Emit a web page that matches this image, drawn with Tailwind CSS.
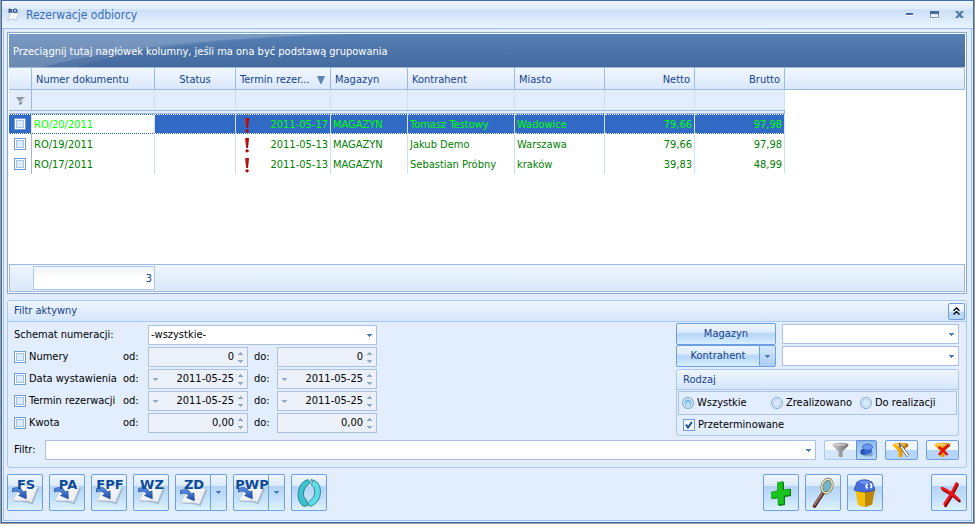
<!DOCTYPE html>
<html lang="pl">
<head>
<meta charset="utf-8">
<title>Rezerwacje odbiorcy</title>
<script src="https://cdn.jsdelivr.net/npm/@tailwindcss/browser@4"></script>
</head>
<body class="bg-[#9d9d9d] font-['DejaVu_Sans_Condensed','DejaVu_Sans',sans-serif] text-[11px] leading-4 text-black">
<svg class="absolute h-0 w-0" aria-hidden="true">
  <defs>
    <linearGradient id="arrowFill" x1="0" y1="0" x2="0" y2="1"><stop offset="0" stop-color="#5a94ee"/><stop offset="1" stop-color="#1c4aa6"/></linearGradient>
    <linearGradient id="paperFill" x1="0" y1="0" x2="1" y2="1"><stop offset="0" stop-color="#ffffff"/><stop offset="1" stop-color="#e4e8ee"/></linearGradient>
    <linearGradient id="gold" x1="0" y1="0" x2="1" y2="0"><stop offset="0" stop-color="#ffc62a"/><stop offset=".5" stop-color="#f0a000"/><stop offset="1" stop-color="#a85f00"/></linearGradient>
    <linearGradient id="silver" x1="0" y1="0" x2="1" y2="0"><stop offset="0" stop-color="#cfcfcf"/><stop offset=".5" stop-color="#9a9a9a"/><stop offset="1" stop-color="#6f6f6f"/></linearGradient>
    <linearGradient id="redFill" x1="0" y1="0" x2="1" y2="0"><stop offset="0" stop-color="#e02020"/><stop offset="1" stop-color="#8e0000"/></linearGradient>
  </defs>
  <symbol id="down" viewBox="0 0 5 3"><path d="M0 0H5V1H4V2H3V3H2V2H1V1H0Z" fill="currentColor"/></symbol>
  <symbol id="up" viewBox="0 0 5 3"><path d="M0 3H5V2H4V1H3V0H2V1H1V2H0Z" fill="currentColor"/></symbol>
  <symbol id="bang" viewBox="0 0 6 16"><path d="M1 1.2Q3 .2 5 1.2L4 11H2.2Z" fill="url(#redFill)"/><ellipse cx="3.1" cy="13.8" rx="1.7" ry="1.6" fill="#b00808"/></symbol>
  <symbol id="sheet" viewBox="0 0 36 37">
    <path d="M14 12L31 13L24.500 29.500Q20 27 14 27L6 26.500Z" fill="#6b7f96" opacity=".45" transform="translate(1 1)"/>
    <path d="M14 11L31 12.500L24.500 28.500Q20 26 14 27L6 26.500Z" fill="url(#paperFill)" stroke="#b9c2cd" stroke-width=".6"/>
    <path d="M5.500 14.500Q13 11.500 16.500 18L19 16.800L19.300 24.800L11.500 21.500L13.700 20Q11 15.500 5.500 18Z" fill="url(#arrowFill)" stroke="#1b3f86" stroke-width=".6"/>
  </symbol>
  <symbol id="funnel" viewBox="0 0 17 16">
    <path d="M.5 3.500L6.500 9.500V14.500Q8.500 16 10.500 14.500V9.500L16.500 3.500Z"/>
    <ellipse cx="8.500" cy="3" rx="8" ry="2.300"/>
    <ellipse cx="8.500" cy="2.700" rx="5.500" ry="1.100" fill="#fff" opacity=".45"/>
  </symbol>
</svg>

<div class="flex min-h-screen flex-col p-px pt-0">
<div class="flex flex-1 flex-col border border-[#3f6da8] bg-[#e2edfd]">
  <header class="flex h-7 items-center gap-[6px] border-b border-[#9dbfe9] bg-[linear-gradient(#f0f6fe_0px,#deebfb_8px,#cbdff7_9px,#eaf4fe_27px)] pl-[5px] pr-[6px]">
    <svg width="13" height="13" viewBox="0 0 13 13"><path d="M4 3L12 5L9 12.500L6.500 11L.5 11.500Z" fill="#f7f8fa" stroke="#b3bac4" stroke-width=".7"/><text x="1" y="5" font-size="6" font-weight="700" font-family="DejaVu Sans" fill="#0a3a80">RO</text></svg>
    <h1 class="flex-1 text-[12px] text-[#376db5]">Rezerwacje odbiorcy</h1>
    <div class="flex items-center gap-[9px]">
      <button aria-label="Minimalizuj" class="grid h-4 w-4 place-items-center"><svg width="7" height="3"><path d="M0 0H7V2H0Z" fill="#47699d"/><path d="M0 2H7V3H0Z" fill="#fff"/></svg></button>
      <button aria-label="Maksymalizuj" class="grid h-4 w-4 place-items-center"><svg width="9" height="8"><path d="M.5 .5H8.500V6.500H.5Z" fill="#eaf3fd" stroke="#7793bd"/><path d="M0 0H9V3H0Z" fill="#47699d"/><path d="M0 7H9V8H0Z" fill="#fff"/></svg></button>
      <button aria-label="Zamknij okno" class="grid h-4 w-4 place-items-center"><svg width="9" height="8" viewBox="0 0 9 8"><path d="M0 0H3L4.500 2L6 0H9L6 3.500L9 7H6L4.500 5.200L3 7H0L3 3.500Z" fill="#56779f"/></svg></button>
    </div>
  </header>

  <main class="mx-px mb-px flex flex-1 flex-col border-x border-b border-[#9dbfe9] pl-[3px] pr-1 pt-[3px] pb-[9px]">
    <section class="flex flex-1 flex-col border border-[#8ba8d0] bg-white p-px" aria-label="Lista rezerwacji">
      <div class="relative flex h-[33px] items-center bg-linear-to-b from-[#5680b5] to-[#446a9e] px-1 pt-[2px] text-white">
        <svg class="absolute inset-0 h-full w-[350px]" viewBox="0 0 350 33" preserveAspectRatio="none"><path d="M0 0H350Q150 6 67 33H0Z" fill="#fff" opacity=".07"/><path d="M0 0H325Q130 7 34 33H0Z" fill="#fff" opacity=".15"/></svg>
        <p class="relative">Przeciągnij tutaj nagłówek kolumny, jeśli ma ona być podstawą grupowania</p>
      </div>
      <table class="w-full table-fixed border-separate border-spacing-0 text-left text-[#008000]">
        <colgroup><col class="w-[23px]"><col class="w-[123px]"><col class="w-[81px]"><col class="w-[95px]"><col class="w-[77px]"><col class="w-[107px]"><col class="w-[90px]"><col class="w-[90px]"><col class="w-[90px]"><col></colgroup>
        <thead class="text-[#15428b] [&_th]:h-[23px] [&_th]:border-y [&_th]:border-r [&_th]:border-[#9fb9dc] [&_th]:bg-linear-to-b [&_th]:from-[#f1f7ff] [&_th]:to-[#d9e8fb] [&_th]:px-1 [&_th]:pt-[2px] [&_th]:pb-0 [&_th]:font-normal [&_th]:whitespace-nowrap">
          <tr>
            <th aria-label="Wybór"></th><th>Numer dokumentu</th><th class="text-center">Status</th>
            <th><span class="flex items-center justify-between pr-px">Termin rezer...<svg width="8" height="8"><path d="M0 0H8L4.500 8H3.500Z" fill="#5f83b4"/></svg></span></th>
            <th>Magazyn</th><th>Kontrahent</th><th>Miasto</th><th class="text-right">Netto</th><th class="text-right">Brutto</th><td class="border-y border-r border-[#9fb9dc] bg-linear-to-b from-[#f1f7ff] to-[#d9e8fb] rounded-tr-[3px]"></td>
          </tr>
        </thead>
        <tbody>
          <tr class="[&_td]:h-5 [&_td]:border-r [&_td]:border-[#d0dff2] [&_td]:bg-[#e2edfd] [&_td]:p-0">
            <td class="border-r-[#9fb9dc]!"><svg class="mx-auto" width="9" height="9" viewBox="0 0 9 9"><path d="M0 1H9L6 5V8L3 9V5Z" fill="#8d949e"/><path d="M1 8L8 2" stroke="#e2edfd"/></svg></td><td></td><td></td><td></td><td></td><td></td><td></td><td></td><td></td><td class="border-0! bg-white!"></td>
          </tr>
          <tr><td colspan="9" class="h-1 border-y border-r border-[#9fb9dc] bg-[#e2edfd] p-0"></td><td class="p-0"></td></tr>
          <tr class="text-[#00ff00] [&_td]:h-5 [&_td]:border-r [&_td]:border-y [&_td]:border-y-white [&_td]:[border-top-style:dotted] [&_td]:[border-bottom-style:dotted] [&_td]:border-r-[#d0dff2] [&_td]:bg-[#316ac5] [&_td]:px-[2px] [&_td]:pt-[2px] [&_td]:pb-0">
            <td class="pt-0!"><input type="checkbox" aria-label="Zaznacz RO/20/2011" class="mx-auto block h-3 w-3 appearance-none border border-[#6f9bd6] bg-[#dcebfb] shadow-[inset_0_0_0_1px_#fff,inset_0_0_0_2px_#a9c2e2]"></td>
            <td class="border-y-[#316ac5]! bg-white!">RO/20/2011</td><td></td>
            <td><span class="flex items-center justify-between pl-[6px]"><svg width="6" height="16"><use href="#bang"/></svg>2011-05-17</span></td>
            <td>MAGAZYN</td><td>Tomasz Testowy</td><td>Wadowice</td><td class="text-right">79,66</td><td class="text-right [border-right-style:dotted]">97,98</td><td class="border-0! bg-white!"></td>
          </tr>
          <tr class="[&_td]:h-5 [&_td]:border-r [&_td]:border-[#d0dff2] [&_td]:px-[2px] [&_td]:pt-[2px] [&_td]:pb-0">
            <td class="border-r-[#9fb9dc]! pt-0!"><input type="checkbox" aria-label="Zaznacz RO/19/2011" class="mx-auto block h-3 w-3 appearance-none border border-[#6f9bd6] bg-[#dcebfb] shadow-[inset_0_0_0_1px_#fff,inset_0_0_0_2px_#a9c2e2]"></td>
            <td>RO/19/2011</td><td></td>
            <td><span class="flex items-center justify-between pl-[6px]"><svg width="6" height="16"><use href="#bang"/></svg>2011-05-13</span></td>
            <td>MAGAZYN</td><td>Jakub Demo</td><td>Warszawa</td><td class="text-right">79,66</td><td class="text-right">97,98</td><td class="border-0!"></td>
          </tr>
          <tr class="[&_td]:h-5 [&_td]:border-r [&_td]:border-[#d0dff2] [&_td]:px-[2px] [&_td]:pt-[2px] [&_td]:pb-0">
            <td class="border-r-[#9fb9dc]! pt-0!"><input type="checkbox" aria-label="Zaznacz RO/17/2011" class="mx-auto block h-3 w-3 appearance-none border border-[#6f9bd6] bg-[#dcebfb] shadow-[inset_0_0_0_1px_#fff,inset_0_0_0_2px_#a9c2e2]"></td>
            <td>RO/17/2011</td><td></td>
            <td><span class="flex items-center justify-between pl-[6px]"><svg width="6" height="16"><use href="#bang"/></svg>2011-05-13</span></td>
            <td>MAGAZYN</td><td>Sebastian Próbny</td><td>kraków</td><td class="text-right">39,83</td><td class="text-right">48,99</td><td class="border-0!"></td>
          </tr>
        </tbody>
      </table>
      <footer class="mt-auto flex h-7 border border-[#9fb9dc] bg-linear-to-b from-[#eef5ff] to-[#d9e8fb] py-px pl-[23px]">
        <output class="w-[122px] border border-[#b0c6e4] bg-linear-to-b from-[#edf3f8] to-white to-50% pr-[2px] text-right leading-6 text-[#15428b]">3</output>
      </footer>
    </section>

    <section class="mt-[6px] rounded-[3px] border border-[#a9c8f0]">
      <div class="flex h-[21px] items-center justify-between rounded-t-[2px] border-b border-[#a9c8f0] bg-linear-to-b from-[#eef5ff] to-[#d5e6fb] pl-[6px] pr-px">
        <h2 class="text-[#15428b]">Filtr aktywny</h2>
        <button aria-label="Zwiń filtr" class="grid h-[17px] w-[17px] place-items-center rounded-[2px] border border-[#6b9fe0] bg-linear-to-b from-[#f2f8ff] from-45% to-[#b8d8f8] to-55%"><svg width="7" height="8" fill="none" stroke="#000" stroke-width="1.400"><path d="M.5 3.700L3.500 .9L6.500 3.700M.5 7.500L3.500 4.700L6.500 7.500"/></svg></button>
      </div>
      <div class="flex justify-between pl-[6px] pr-[7px]">
        <div class="grid auto-rows-[20px] grid-cols-[109px_25px_100px_29px_100px] items-center gap-y-[2px] pt-[3px]
          [&_input[type=text]]:min-w-0 [&_input[type=text]]:flex-1 [&_input[type=text]]:bg-transparent [&_input[type=text]]:text-right [&_input[type=text]]:text-black">
          <label for="schemat" class="col-span-2">Schemat numeracji:</label>
          <div class="relative col-span-3 h-5"><select id="schemat" class="h-5 w-full appearance-none border border-[#abc1de] bg-white px-[2px]"><option>-wszystkie-</option></select><svg class="pointer-events-none absolute top-[9px] right-[5px] text-[#4a7ac0]" width="5" height="3"><use href="#down"/></svg></div>

          <label class="flex items-center gap-[3px]"><input type="checkbox" class="h-3 w-3 appearance-none border border-[#6f9bd6] bg-[#dcebfb] shadow-[inset_0_0_0_1px_#fff,inset_0_0_0_2px_#a9c2e2]">Numery</label>
          <label for="n1">od:</label>
          <div class="flex h-5 items-center border border-[#abc1de] bg-[#ebf0f9]"><input id="n1" type="text" disabled value="0"><span class="flex w-[13px] flex-col items-center gap-[5px] text-[#8fa9cc]"><svg width="5" height="3"><use href="#up"/></svg><svg width="5" height="3"><use href="#down"/></svg></span></div>
          <label for="n2" class="pl-[6px]">do:</label>
          <div class="flex h-5 items-center border border-[#abc1de] bg-[#ebf0f9]"><input id="n2" type="text" disabled value="0"><span class="flex w-[13px] flex-col items-center gap-[5px] text-[#8fa9cc]"><svg width="5" height="3"><use href="#up"/></svg><svg width="5" height="3"><use href="#down"/></svg></span></div>

          <label class="flex items-center gap-[3px] whitespace-nowrap"><input type="checkbox" class="h-3 w-3 appearance-none border border-[#6f9bd6] bg-[#dcebfb] shadow-[inset_0_0_0_1px_#fff,inset_0_0_0_2px_#a9c2e2]">Data wystawienia</label>
          <label for="d1">od:</label>
          <div class="flex h-5 items-center border border-[#abc1de] bg-[#ebf0f9]"><svg class="ml-1 text-[#8fa9cc]" width="5" height="3"><use href="#down"/></svg><input id="d1" type="text" disabled value="2011-05-25"><span class="flex w-[13px] flex-col items-center gap-[5px] text-[#8fa9cc]"><svg width="5" height="3"><use href="#up"/></svg><svg width="5" height="3"><use href="#down"/></svg></span></div>
          <label for="d2" class="pl-[6px]">do:</label>
          <div class="flex h-5 items-center border border-[#abc1de] bg-[#ebf0f9]"><svg class="ml-1 text-[#8fa9cc]" width="5" height="3"><use href="#down"/></svg><input id="d2" type="text" disabled value="2011-05-25"><span class="flex w-[13px] flex-col items-center gap-[5px] text-[#8fa9cc]"><svg width="5" height="3"><use href="#up"/></svg><svg width="5" height="3"><use href="#down"/></svg></span></div>

          <label class="flex items-center gap-[3px] whitespace-nowrap"><input type="checkbox" class="h-3 w-3 appearance-none border border-[#6f9bd6] bg-[#dcebfb] shadow-[inset_0_0_0_1px_#fff,inset_0_0_0_2px_#a9c2e2]">Termin rezerwacji</label>
          <label for="t1">od:</label>
          <div class="flex h-5 items-center border border-[#abc1de] bg-[#ebf0f9]"><svg class="ml-1 text-[#8fa9cc]" width="5" height="3"><use href="#down"/></svg><input id="t1" type="text" disabled value="2011-05-25"><span class="flex w-[13px] flex-col items-center gap-[5px] text-[#8fa9cc]"><svg width="5" height="3"><use href="#up"/></svg><svg width="5" height="3"><use href="#down"/></svg></span></div>
          <label for="t2" class="pl-[6px]">do:</label>
          <div class="flex h-5 items-center border border-[#abc1de] bg-[#ebf0f9]"><svg class="ml-1 text-[#8fa9cc]" width="5" height="3"><use href="#down"/></svg><input id="t2" type="text" disabled value="2011-05-25"><span class="flex w-[13px] flex-col items-center gap-[5px] text-[#8fa9cc]"><svg width="5" height="3"><use href="#up"/></svg><svg width="5" height="3"><use href="#down"/></svg></span></div>

          <label class="flex items-center gap-[3px]"><input type="checkbox" class="h-3 w-3 appearance-none border border-[#6f9bd6] bg-[#dcebfb] shadow-[inset_0_0_0_1px_#fff,inset_0_0_0_2px_#a9c2e2]">Kwota</label>
          <label for="k1">od:</label>
          <div class="flex h-5 items-center border border-[#abc1de] bg-[#ebf0f9]"><input id="k1" type="text" disabled value="0,00"><span class="flex w-[13px] flex-col items-center gap-[5px] text-[#8fa9cc]"><svg width="5" height="3"><use href="#up"/></svg><svg width="5" height="3"><use href="#down"/></svg></span></div>
          <label for="k2" class="pl-[6px]">do:</label>
          <div class="flex h-5 items-center border border-[#abc1de] bg-[#ebf0f9]"><input id="k2" type="text" disabled value="0,00"><span class="flex w-[13px] flex-col items-center gap-[5px] text-[#8fa9cc]"><svg width="5" height="3"><use href="#up"/></svg><svg width="5" height="3"><use href="#down"/></svg></span></div>
        </div>

        <div class="w-[283px] pt-px">
          <div class="grid grid-cols-[100px_1fr] items-center gap-x-[6px]">
            <button class="h-[22px] rounded-[2px] border border-[#6b9fe0] bg-[linear-gradient(#eef6ff_0%,#dcebfc_40%,#b5d5f7_50%,#d8efff_100%)] text-[#15428b]">Magazyn</button>
            <div class="relative h-5"><select aria-label="Magazyn" class="h-5 w-full appearance-none border border-[#abc1de] bg-white px-[2px]"><option></option></select><svg class="pointer-events-none absolute top-[9px] right-[5px] text-[#4a7ac0]" width="5" height="3"><use href="#down"/></svg></div>
            <div class="flex">
              <button class="h-[22px] flex-1 rounded-l-[2px] border border-[#6b9fe0] bg-[linear-gradient(#eef6ff_0%,#dcebfc_40%,#b5d5f7_50%,#d8efff_100%)] text-[#15428b]">Kontrahent</button>
              <button aria-label="Kontrahent – więcej" class="grid h-[22px] w-4 place-items-center rounded-r-[2px] border border-l-0 border-[#6b9fe0] bg-linear-to-b from-[#d5e8fc] to-[#a9cdf5] text-[#4a7ac0]"><svg width="5" height="3"><use href="#down"/></svg></button>
            </div>
            <div class="relative h-5"><select aria-label="Kontrahent" class="h-5 w-full appearance-none border border-[#abc1de] bg-white px-[2px]"><option></option></select><svg class="pointer-events-none absolute top-[9px] right-[5px] text-[#4a7ac0]" width="5" height="3"><use href="#down"/></svg></div>
          </div>
          <div role="group" aria-labelledby="rodzaj-t" class="mt-[2px] rounded-[3px] border border-[#a9c8f0] [&_input[type=radio]]:h-3 [&_input[type=radio]]:w-3 [&_input[type=radio]]:appearance-none [&_input[type=radio]]:rounded-full [&_input[type=radio]]:border [&_input[type=radio]]:border-[#7ba7dd] [&_input[type=radio]]:shadow-[inset_0_0_0_1px_#eef6ff,inset_0_0_0_2px_#b9cfe9]">
            <h3 id="rodzaj-t" class="h-5 rounded-t-[2px] border-b border-[#a9c8f0] bg-linear-to-b from-[#eef5ff] to-[#d5e6fb] pl-[6px] pt-[2px] text-[#15428b]">Rodzaj</h3>
            <div class="mx-px mt-px grid h-6 grid-cols-[89px_89px_1fr] items-center border border-[#abc1de] pl-[3px]">
              <label class="flex items-center gap-[3px]"><input type="radio" name="rodzaj" checked class="bg-[radial-gradient(circle_at_50%_65%,#d9f5ff,#4aa6ee_60%)]">Wszystkie</label>
              <label class="flex items-center gap-[3px]"><input type="radio" name="rodzaj" class="bg-[#d8e9fb]">Zrealizowano</label>
              <label class="flex items-center gap-[3px]"><input type="radio" name="rodzaj" class="bg-[#d8e9fb]">Do realizacji</label>
            </div>
            <label class="flex h-5 items-center gap-[3px] pl-[6px]"><span class="relative h-3 w-3"><input type="checkbox" checked class="block h-3 w-3 appearance-none border border-[#6f9bd6] bg-[#f1f7fe]"><svg class="pointer-events-none absolute inset-0" width="12" height="12" fill="none" stroke="#1d4f96" stroke-width="2"><path d="M3 5.500L5 8.500L9 3"/></svg></span>Przeterminowane</label>
          </div>
        </div>
      </div>
      <div class="mt-1 mb-[7px] flex items-center pl-[6px] pr-[7px]">
        <label for="filtr" class="w-[31px]">Filtr:</label>
        <div class="relative h-5 flex-1"><select id="filtr" class="h-5 w-full appearance-none border border-[#abc1de] bg-white px-[2px]"><option></option></select><svg class="pointer-events-none absolute top-[9px] right-[5px] text-[#4a7ac0]" width="5" height="3"><use href="#down"/></svg></div>
        <div class="ml-2 flex h-5">
          <button aria-label="Filtruj" class="grid w-8 place-items-center rounded-l-[2px] border border-r-0 border-[#a9c8ee] bg-linear-to-b from-[#f6faff] from-50% to-[#d4e6fa] to-50%"><svg width="17" height="16" fill="url(#silver)"><use href="#funnel"/></svg></button>
          <button aria-label="Przypnij" class="grid w-[21px] place-items-center rounded-r-[2px] border border-[#5b8fd6] bg-linear-to-b from-[#8fb8ea] to-[#b9dbfa]"><svg width="15" height="14" viewBox="0 0 15 14"><ellipse cx="9" cy="11" rx="5" ry="2.500" fill="#51719f" opacity=".5"/><ellipse cx="4.500" cy="9" rx="3.200" ry="3" fill="#2a53b8"/><path d="M4 3Q8 0 12 2.500L13 9Q10 12 6 11Z" fill="#3465d2"/><ellipse cx="8.500" cy="4.200" rx="5" ry="3" fill="#6c9af2" stroke="#2b55b5" stroke-width=".7"/></svg></button>
        </div>
        <button aria-label="Edytuj filtr" class="ml-2 grid h-5 w-[33px] place-items-center rounded-[2px] border border-[#6b9fe0] bg-linear-to-b from-[#f2f8ff] from-50% to-[#b5d6f8] to-50%"><svg width="19" height="16"><g fill="url(#gold)"><use href="#funnel" width="17" height="16"/></g><path d="M8 3L16 14" stroke="#555" stroke-width="3"/><path d="M8 3L16 14" stroke="#fff" stroke-width="1.800"/><path d="M7 1L9 5" stroke="#222"/></svg></button>
        <button aria-label="Usuń filtr" class="ml-2 grid h-5 w-[33px] place-items-center rounded-[2px] border border-[#6b9fe0] bg-linear-to-b from-[#f2f8ff] from-50% to-[#b5d6f8] to-50%"><svg width="18" height="16"><g fill="url(#gold)"><use href="#funnel" width="17" height="16"/></g><path d="M4.500 5Q9 7.500 13.500 13M14.500 3Q9 7 5 13" fill="none" stroke="#e01010" stroke-width="2.500"/></svg></button>
      </div>
    </section>

    <nav aria-label="Polecenia" class="mt-[6px] flex gap-[6px] [&_button]:h-[37px] [&_button]:border [&_button]:border-[#6b9fe0] [&_button]:bg-[linear-gradient(#eff6ff_0%,#dcebfb_30%,#b3d3f4_31%,#c5e1fa_70%,#dff3ff_100%)] [&_text]:fill-[#0d4a96] [&_text]:font-['DejaVu_Sans'] [&_text]:text-[13px] [&_text]:font-bold">
      <button class="w-9 rounded-[2px]"><svg class="-m-px" width="36" height="37"><use href="#sheet"/><text x="19" y="15" text-anchor="middle">FS</text></svg></button>
      <button class="w-9 rounded-[2px]"><svg class="-m-px" width="36" height="37"><use href="#sheet"/><text x="19" y="15" text-anchor="middle">PA</text></svg></button>
      <button class="w-9 rounded-[2px]"><svg class="-m-px" width="36" height="37"><use href="#sheet"/><text x="19" y="15" text-anchor="middle">FPF</text></svg></button>
      <button class="w-9 rounded-[2px]"><svg class="-m-px" width="36" height="37"><use href="#sheet"/><text x="19" y="15" text-anchor="middle">WZ</text></svg></button>
      <div class="flex">
        <button class="w-9 rounded-l-[2px]"><svg class="-m-px" width="36" height="37"><use href="#sheet" y="2" width="36" height="37"/><text x="19" y="15" text-anchor="middle">ZD</text></svg></button>
        <button aria-label="ZD – więcej" class="grid w-4 place-items-center rounded-r-[2px] border-l-0! text-[#4a7ac0]"><svg width="5" height="3"><use href="#down"/></svg></button>
      </div>
      <div class="flex">
        <button class="w-9 rounded-l-[2px]"><svg class="-m-px" width="36" height="37"><use href="#sheet"/><text x="19" y="15" text-anchor="middle">PWP</text></svg></button>
        <button aria-label="PWP – więcej" class="grid w-4 place-items-center rounded-r-[2px] border-l-0! text-[#4a7ac0]"><svg width="5" height="3"><use href="#down"/></svg></button>
      </div>
      <button aria-label="Odśwież" class="w-9 rounded-[2px]"><svg class="-m-px" width="36" height="37"><g stroke="#14707c" stroke-width=".8"><path d="M17 5.500Q8 8 7 20Q7 29 13 32.500L16.500 31.500L15.500 26Q11.500 23 12.500 18Q13.500 13 17 11L19.500 8Z" fill="#3cc3cf"/><path d="M20 5.500Q29 7 29.500 17Q29.500 29 19 32.500L16.500 29L19 26.500Q23.500 24 24 18Q24 13 20 10.500L21.500 8Z" fill="#5fdde6"/></g></svg></button>

      <button aria-label="Dodaj" class="ml-auto w-9 rounded-[2px]"><svg class="-m-px" width="36" height="37"><path d="M15 9.500L21 8V16L28 15V22L22 23V31L16 32V24L9.500 25V18L15 17.500Z" fill="#056b08"/><path d="M14.500 8.500L20 7.500V16L27 15V21L21 22V30L15 31V23.500L8.500 24.500V18L14.500 17Z" fill="#19c41c" stroke="#0b8d10" stroke-width=".6"/></svg></button>
      <button aria-label="Podgląd" class="w-9 rounded-[2px]"><svg class="-m-px" width="36" height="37"><path d="M18 19L9.500 32" stroke="#4a2a22" stroke-width="3.600" stroke-linecap="round"/><path d="M17.500 19L9.500 31" stroke="#a8705e" stroke-width="1.800" stroke-linecap="round"/><ellipse cx="22" cy="12" rx="5" ry="7" transform="rotate(18 22 12)" fill="#74b4c8" stroke="#5f5a3c" stroke-width="2.600"/><ellipse cx="22" cy="12" rx="5" ry="7" transform="rotate(18 22 12)" fill="none" stroke="#f1ebc0" stroke-width="1.500"/></svg></button>
      <button aria-label="Archiwum" class="w-9 rounded-[2px]"><svg class="-m-px" width="36" height="37"><path d="M8 15L28 15L25 30.500Q18 35 11 31Z" fill="#f3bd0c"/><path d="M18 17L28 15L25 30.500L18 33Z" fill="#bd8605"/><path d="M10 8Q17 3.500 25 8L28 16Q18 20 7 16Z" fill="#456fdc" stroke="#223f9a" stroke-width=".7"/><path d="M11 8Q17 5 24 8L18 10Z" fill="#7396ef"/><path d="M20.500 10Q18 12 20.500 14.500M23 9.500Q26 11.500 23.500 14" fill="none" stroke="#fff" stroke-width="1.800"/></svg></button>
      <button aria-label="Zamknij" class="ml-[42px] w-9 rounded-[2px]"><svg class="-m-px" width="36" height="37"><path d="M11 14.500Q20 19 27.500 26M25.500 9.500Q21 20 13.500 31" transform="translate(1 1)" fill="none" stroke="#840000" stroke-width="2.600" stroke-linecap="round"/><path d="M11 14Q20 18 27 25M25.500 9.500Q21 20 13.500 30" fill="none" stroke="#ee1515" stroke-width="2.600" stroke-linecap="round"/></svg></button>
    </nav>
  </main>
</div>
</div>
</body>
</html>
